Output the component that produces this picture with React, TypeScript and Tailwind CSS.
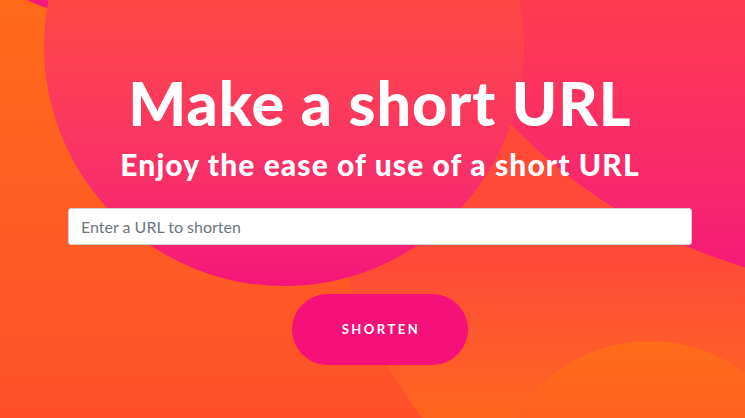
import React from "react";

// Decorative gradient blobs behind the hero
const Blobs = () => (
  <div aria-hidden className="pointer-events-none absolute inset-0 overflow-hidden">
    <div className="absolute left-[-156px] top-[-586px] h-[612px] w-[612px] rounded-full bg-[#f3187a]" />
    <div className="absolute left-[317px] top-[-433px] h-[1066px] w-[1066px] rounded-full bg-linear-to-b from-[#ff4a38] from-65% to-[#ff661c] to-80%" />
    <div className="absolute left-[360px] top-[-790px] h-[1080px] w-[1080px] rounded-full bg-linear-to-b from-[#ff3d48] from-70% to-[#f5157a] to-100%" />
    <div className="absolute left-[44px] top-[-194px] h-[480px] w-[480px] rounded-full bg-linear-to-b from-[#ff4a3c] from-35% to-[#f5147a] to-100%" />
    <div className="absolute left-[493px] top-[341px] h-[314px] w-[314px] rounded-full bg-linear-to-b from-[#ff6c1a] to-[#ff5a22] to-40%" />
  </div>
);

export default function App() {
  return (
    <main className="relative h-screen w-full overflow-hidden bg-linear-to-b from-[#ff6a1a] to-[#ff4f2a] font-['Lato','Noto_Sans',sans-serif]">
      <Blobs />
      <div className="relative flex flex-col items-center pl-[68px] pr-[53px] pt-[67px]">
        <h1 className="whitespace-nowrap text-[61px] leading-[72px] font-black tracking-[1px] text-white">
          Make a short URL
        </h1>
        <p className="mt-[7px] whitespace-nowrap text-[30px] leading-[36px] font-black tracking-[1.1px] text-white">
          Enjoy the ease of use of a short URL
        </p>
        <input
          type="text"
          placeholder="Enter a URL to shorten"
          className="mt-[26px] h-[37px] w-full rounded-[3px] border border-[#ced4da] bg-white px-3 text-[16px] text-gray-800 placeholder:text-[#6c757d] outline-none"
        />
        <button className="mt-[49px] h-[71px] w-[176px] rounded-full bg-[#f5107a] pl-[2px] text-[13px] font-bold tracking-[2.5px] text-white">
          SHORTEN
        </button>
      </div>
    </main>
  );
}
